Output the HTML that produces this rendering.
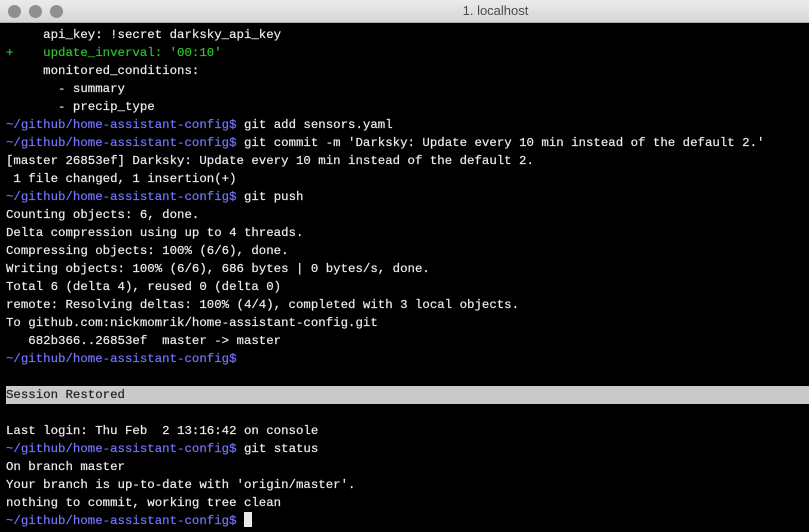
<!DOCTYPE html>
<html><head><style>
html,body{margin:0;padding:0;width:809px;height:532px;overflow:hidden;background:#000}
#tb{position:absolute;left:0;top:0;width:809px;height:22px;background:linear-gradient(#ebebeb,#d6d6d6);border-bottom:1px solid #a8a8a8}
.dot{position:absolute;top:5px;width:13px;height:13px;border-radius:50%;background:#8f8f8f}
#title{position:absolute;left:0;width:809px;top:3px;text-align:center;font:13px "Liberation Sans",sans-serif;color:#4a4a4a;padding-left:182px;box-sizing:border-box}
#t{position:absolute;left:6px;top:26px;font:12.4px/18px "Liberation Mono",monospace;color:#ececec;white-space:pre;-webkit-text-stroke:0.2px currentColor}
.p{color:#7474ff}.g{color:#2ec02e}
.sr{display:inline-block;width:803px;background:#c9c9c9;color:#222}
.cur{display:inline-block;width:8px;height:15px;background:#e8e8e8;vertical-align:-3px}
</style></head><body>
<div id="tb"><div class="dot" style="left:8px"></div><div class="dot" style="left:29px"></div><div class="dot" style="left:50px"></div><div id="title">1. localhost</div></div>
<div id="t">     api_key: !secret darksky_api_key
<span class="g">+    update_inverval: '00:10'</span>
     monitored_conditions:
       - summary
       - precip_type
<span class="p">~/github/home-assistant-config$</span> git add sensors.yaml
<span class="p">~/github/home-assistant-config$</span> git commit -m 'Darksky: Update every 10 min instead of the default 2.'
[master 26853ef] Darksky: Update every 10 min instead of the default 2.
 1 file changed, 1 insertion(+)
<span class="p">~/github/home-assistant-config$</span> git push
Counting objects: 6, done.
Delta compression using up to 4 threads.
Compressing objects: 100% (6/6), done.
Writing objects: 100% (6/6), 686 bytes | 0 bytes/s, done.
Total 6 (delta 4), reused 0 (delta 0)
remote: Resolving deltas: 100% (4/4), completed with 3 local objects.
To github.com:nickmomrik/home-assistant-config.git
   682b366..26853ef  master -&gt; master
<span class="p">~/github/home-assistant-config$</span>

<span class="sr">Session Restored</span>

Last login: Thu Feb  2 13:16:42 on console
<span class="p">~/github/home-assistant-config$</span> git status
On branch master
Your branch is up-to-date with 'origin/master'.
nothing to commit, working tree clean
<span class="p">~/github/home-assistant-config$</span> <span class="cur"></span></div>
</body></html>
